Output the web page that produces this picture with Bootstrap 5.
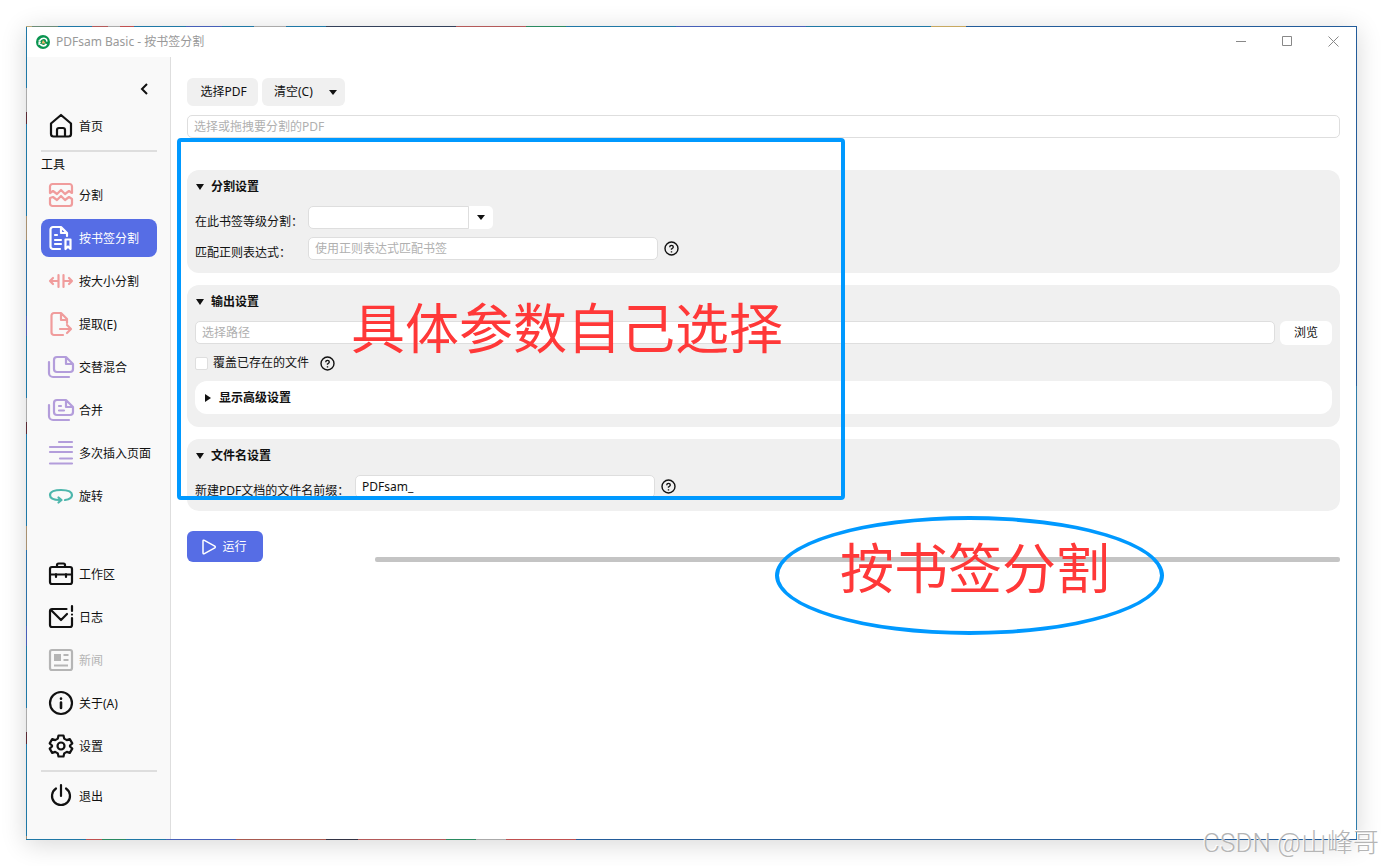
<!DOCTYPE html>
<html lang="zh-CN">
<head>
<meta charset="utf-8">
<meta name="viewport" content="width=device-width, initial-scale=1">
<title>PDFsam Basic - 按书签分割</title>
<link href="https://cdn.jsdelivr.net/npm/bootstrap@5.3.0/dist/css/bootstrap.min.css" rel="stylesheet">
<style>
  body { font-family: "Noto Sans", "Noto Sans CJK SC", sans-serif; font-size: 12px; line-height: 18px; color: #111; background: #fff; }
  input, button { color: inherit; }
  .desktop { min-height: 100vh; padding: 26px; position: relative; overflow: hidden; }
  .app-window { min-width: 0; padding: 1px; box-shadow: 0 4px 24px rgba(0,0,0,.16);
    background:
      linear-gradient(90deg, #b8a878 0 6px, #6c8c78 6px 32px, #1f78a6 32px 66px, #b45a5a 66px 82px, #aaa 82px 94px, #c05050 94px 108px, #1f78a6 108px 160px, #4660b8 160px 196px, #1f78a6 196px 228px, #aaa 228px 260px, #1f78a6 260px 300px, #33405a 300px 430px, #b45a5a 430px 500px, #2a8a60 500px 540px, #1f78a6 540px 650px, #4660b8 650px 780px, #1f78a6 780px 905px, #c8a860 905px 940px, #235c9a 940px) top / 100% 1px no-repeat,
      linear-gradient(90deg, #1f78a6 0 60px, #c05050 60px 76px, #2a8a60 76px 100px, #1f78a6 100px 140px, #4660b8 140px 210px, #a85a50 210px 300px, #334 300px 332px, #b45a5a 332px 420px, #2a8a60 420px 450px, #aaa 450px 480px, #c05050 480px 550px, #235c9a 550px) bottom / 100% 1px no-repeat,
      repeating-linear-gradient(180deg, #1f78a6 0 62px, #aaa 62px 86px, #5a2a34 86px 98px, #1f78a6 98px 190px, #a89070 190px 214px, #2a70a8 214px 290px, #4660b8 290px 310px) left / 1px 100% no-repeat,
      linear-gradient(180deg, #235c9a 0 360px, #2f7cab 360px) right / 1px 100% no-repeat; }
  .titlebar { height: 30px; padding-left: 9px; gap: 6px; color: #999; background: #fff; }
  .win-btn { display: block; width: 46px; height: 28px; padding: 0; border: 0; background: none; color: #888; }
  .win-btn svg { display: block; margin: 0 auto; }
  .side { width: 144px; flex: none; padding: 13px 13px 24px 14px; background: #f9f9f9; border-right: 1px solid #dedede; }
  .collapse-btn { height: 37px; padding: 0 8px 0 0; border: 0; background: none; }
  .collapse-btn svg { display: block; }
  .side-btn { display: flex; align-items: center; width: 100%; height: 38px; gap: 6px; padding: 2px 8px 0; border: 0; border-radius: 8px; background: none; white-space: nowrap; text-align: left; }
  .side-btn svg { width: 24px; height: 24px; margin-bottom: 2px; flex: none; overflow: visible; }
  .side-btn.active { background: #566de5; color: #fff; }
  .side-btn:disabled { color: #b5b5b5; }
  .side-list { display: flex; flex-direction: column; gap: 5px; }
  .rule { height: 2px; background: #dedede; }
  .side-title { height: 24px; line-height: 26px; }
  .ico { fill: none; stroke: currentColor; stroke-width: 2.200; stroke-linecap: round; stroke-linejoin: round; }
  .pink { color: #f09c9c; } .violet { color: #b39ddb; } .teal { color: #4db6ac; }
  .work { min-width: 0; padding: 21px 16px 16px; background: #fff; }
  .tool-btn { width: 71px; height: 28px; border: 0; border-radius: 6px; background: #f0f0f0; padding: 0 8px 0 10px; }
  .tool-btn.split { width: 83px; padding-left: 12px; }
  .source { margin: 9px 0 32px; }
  .panels { gap: 12px; }
  .path-line { gap: 5px; }
  .field { height: 23px; border: 1px solid #dedede; border-radius: 5px; padding: 0 6px; background: #fff; font-size: 12px; line-height: 18px; min-width: 0; outline: 0; }
  .field::placeholder { color: #b0b0b0; opacity: 1; }
  .panel { background: #f0f0f0; border-radius: 12px; padding: 0 8px 13px; }
  .panel-head { display: flex; align-items: center; gap: 6px; height: 32px; margin-bottom: 4px; padding: 2px 0 0; border: 0; background: none; font-weight: 700; }
  .row-label { width: 113px; padding-top: 7px; white-space: nowrap; align-self: flex-start; }
  .row-label.wide { width: 160px; }
  .form-line { height: 23px; }
  .level { width: 161px; border-radius: 5px 0 0 5px; }
  .arrow-btn { width: 24px; height: 23px; border: 0; border-radius: 0 5px 5px 0; background: #fff; }
  .help { margin-left: 6px; flex: none; }
  .w350 { width: 350px; } .w300 { width: 300px; }
  .browse { width: 52px; height: 24px; border: 0; border-radius: 6px; background: #fff; }
  .tick { appearance: none; width: 13px; height: 13px; margin: 0; border: 1px solid #dedede; border-radius: 2px; background: #fff; }
  .check-line { height: 36px; gap: 5px; }
  .advanced { width: 100%; height: 33px; margin: 0; padding: 0 8px; background: #fff; border-radius: 12px; }
  .run-line { margin-top: 20px; }
  .run-btn { width: 76px; height: 31px; padding: 0 2px 0 0; border: 0; border-radius: 6px; background: #566de5; color: #fff; gap: 5px; }
  .meter { height: 5px; border-radius: 2px; background: #c4c4c4; margin-left: 112px; }
  .note { position: absolute; pointer-events: none; color: #ff3838; font-family: "Noto Sans CJK SC", sans-serif; font-size: 54px; line-height: 60px; white-space: nowrap; }
  .note-box { left: 6px; top: 81px; width: 668px; height: 362px; border: 4px solid #09f; border-radius: 4px; padding: 154px 0 0 170px; }
  .note-oval { left: 604px; top: 459px; width: 389px; height: 119px; border: 4px solid #09f; border-radius: 50%; padding: 16px 0 0 61px; }
  .watermark { position: absolute; right: 4px; bottom: 5px; color: #b5b5b5; font: 300 26px/36px Roboto, "Noto Sans CJK SC", sans-serif; text-shadow: -1px -1px 0 #fff; }
</style>
</head>
<body>
<div class="desktop d-flex">
  <div class="app-window d-flex flex-column flex-grow-1">
    <header class="titlebar d-flex">
      <svg width="14" height="14" viewBox="0 0 14 14" class="align-self-center flex-shrink-0" aria-hidden="true"><circle cx="7" cy="7" r="7" fill="#0a9450"/><path d="M3.200 9.800C2.600 6 4.700 3 8 3.200c2 .2 3 1.600 2.800 3.400" fill="none" stroke="#fff" stroke-width="1.500"/><path d="M4 9.200c2.500 2.400 5 2.200 6.500-.2" fill="none" stroke="#fff" stroke-width="1.600"/><path d="M7 5l2.800 3.600H5.600z" fill="#f2b36b"/><path d="M2.500 5.500L5 8" stroke="#bfe5d0"/></svg>
      <span class="align-self-center">PDFsam Basic - 按书签分割</span>
      <div class="ms-auto d-flex">
        <button class="win-btn" aria-label="最小化"><svg width="11" height="11" viewBox="0 0 11 11"><path d="M0 5.500h10" stroke="currentColor"/></svg></button>
        <button class="win-btn" aria-label="最大化"><svg width="11" height="11" viewBox="0 0 11 11"><path d="M.5.5h9v9h-9z" fill="none" stroke="currentColor"/></svg></button>
        <button class="win-btn" aria-label="关闭"><svg width="11" height="11" viewBox="0 0 11 11"><path d="M.5.5l10 10M10.500.5l-10 10" stroke="currentColor"/></svg></button>
      </div>
    </header>
    <div class="d-flex flex-grow-1">
      <nav class="side d-flex flex-column">
        <button class="collapse-btn align-self-end" aria-label="收起"><svg width="10" height="12" viewBox="0 0 10 12" fill="none" stroke="#111" stroke-width="2"><path d="M8 1L3 6l5 5"/></svg></button>
        <div class="side-list">
          <button class="side-btn"><svg class="ico" viewBox="0 0 24 24"><path d="M2 9.500L12 1l10 8.500v10.500a2.500 2.500 0 0 1-2.500 2.500h-15A2.500 2.500 0 0 1 2 20zM8 22v-6a2 2 0 0 1 2-2h4a2 2 0 0 1 2 2v6"/></svg>首页</button>
          <div class="rule"></div>
        </div>
        <div class="side-title">工具</div>
        <div class="side-list">
          <button class="side-btn"><svg class="ico pink" viewBox="0 0 24 24"><path d="M1 9V3.500A2.500 2.500 0 0 1 3.500 1h17A2.500 2.500 0 0 1 23 3.500V10l-3-2-4 3-4-4-4 4-4-3-3 2zM1 15l3-1 4 3 4-4 4 4 4-3 3 2v4.500a2.500 2.500 0 0 1-2.500 2.500h-17A2.500 2.500 0 0 1 1 20.500z"/></svg>分割</button>
          <button class="side-btn active"><svg class="ico" viewBox="0 0 24 24"><path d="M11 23H4a2.500 2.500 0 0 1-2.500-2.500v-17A2.500 2.500 0 0 1 4 1h8l6 6v3M12 1v6h6M6 9h2M6 14h6M6 18h6M16.500 13.500h5V23L19 20.500 16.500 23z"/></svg>按书签分割</button>
          <button class="side-btn"><svg class="ico pink" viewBox="0 0 24 24"><path d="M9.500 6v12M14.500 6v12M9 12H1M4 9l-3 3 3 3M15 12h8M20 9l3 3-3 3"/></svg>按大小分割</button>
          <button class="side-btn"><svg class="ico pink" viewBox="0 0 24 24"><path d="M14 23H5a2.500 2.500 0 0 1-2.500-2.500v-17A2.500 2.500 0 0 1 5 1h7l6 6v4M12 2v6h6M11 17h10M18 13l4 4-4 4"/></svg>提取(E)</button>
          <button class="side-btn"><svg class="ico violet" viewBox="0 0 24 24"><path d="M8 2h9l7 7v5a3 3 0 0 1-3 3H8a3 3 0 0 1-3-3V5a3 3 0 0 1 3-3zM17 2v7h7M0 7v11a4 4 0 0 0 4 4h16"/></svg>交替混合</button>
          <button class="side-btn"><svg class="ico violet" viewBox="0 0 24 24"><path d="M8 2h9l7 7v5a3 3 0 0 1-3 3H8a3 3 0 0 1-3-3V5a3 3 0 0 1 3-3zM17 2v7h7M0 7v11a4 4 0 0 0 4 4h16M10 8h2M10 12.500h5"/></svg>合并</button>
          <button class="side-btn"><svg class="ico violet" viewBox="0 0 24 24"><path d="M10 1h13M1 6h22M1 11h22M11 17.500h12M1 22.500h22"/></svg>多次插入页面</button>
          <button class="side-btn"><svg class="ico teal" viewBox="0 0 24 24"><path d="M16 16c4-.5 7-2.200 7-5 0-3.200-4.800-5-11-5S1 7.800 1 11s4 5 10 5M9.500 13.500l3 2.500-3 2.500"/></svg>旋转</button>
        </div>
        <div class="side-list mt-auto">
          <button class="side-btn"><svg class="ico" viewBox="0 0 24 24"><path d="M3 5h18a2 2 0 0 1 2 2v13a2 2 0 0 1-2 2H3a2 2 0 0 1-2-2V7a2 2 0 0 1 2-2zM8 5V3a1.500 1.500 0 0 1 1.500-1.500h5A1.500 1.500 0 0 1 16 3v2M1 12.500h22M7 12v3M17 12v3"/></svg>工作区</button>
          <button class="side-btn"><svg class="ico" viewBox="0 0 24 24"><path d="M17.500 4H3a2 2 0 0 0-2 2v14a2 2 0 0 0 2 2h18a2 2 0 0 0 2-2v-7M2 5l10 10 6-6M23 1v5M23 9.500v.1"/></svg>日志</button>
          <button class="side-btn" disabled><svg class="ico" viewBox="0 0 24 24"><path d="M3 2h18a2 2 0 0 1 2 2v16a2 2 0 0 1-2 2H3a2 2 0 0 1-2-2V4a2 2 0 0 1 2-2z"/><path d="M5 6h7v7H5z" fill="currentColor" stroke="none"/><path d="M14.500 7h5M14.500 12h5M5 17.500h14" stroke-linecap="butt"/></svg>新闻</button>
          <button class="side-btn"><svg class="ico" viewBox="0 0 24 24"><circle cx="12" cy="12" r="11"/><path d="M12 11.500V17M12 7.500v.2" stroke-width="2.600"/></svg>关于(A)</button>
          <button class="side-btn"><svg class="ico" viewBox="0 0 24 24"><circle cx="12" cy="12" r="3.500"/><path d="M9.500 1.500h5l.7 3.100 2.600 1.500 3-1 2.500 4.300-2.300 2.100v1l2.300 2.100-2.500 4.300-3-1-2.600 1.500-.7 3.100h-5l-.7-3.100-2.600-1.500-3 1-2.500-4.300L3 12.500v-1L.7 9.400l2.500-4.300 3 1 2.600-1.500z"/></svg>设置</button>
          <div class="rule"></div>
          <button class="side-btn"><svg class="ico" viewBox="0 0 24 24"><path d="M12 1v11M7 4.500a9 9 0 1 0 10 0"/></svg>退出</button>
        </div>
      </nav>
      <main class="work flex-grow-1 position-relative">
        <div class="d-flex gap-1">
          <button class="tool-btn">选择PDF</button>
          <button class="tool-btn split d-flex align-items-center justify-content-between">清空(C)<svg width="8" height="5" viewBox="0 0 8 5"><path d="M0 0h8L4 5z" fill="#111"/></svg></button>
        </div>
        <div class="source d-flex"><input class="field flex-grow-1" type="text" placeholder="选择或拖拽要分割的PDF" aria-label="选择或拖拽要分割的PDF"></div>

        <div class="panels d-flex flex-column">
          <section class="panel">
            <button class="panel-head" aria-expanded="true"><svg width="10" height="6" viewBox="0 0 10 6"><path d="M1 0h8L5 6z" fill="#111"/></svg>分割设置</button>
            <div class="d-flex flex-column gap-2">
              <div class="form-line d-flex align-items-center">
                <label class="row-label" for="level">在此书签等级分割：</label>
                <input class="field level" id="level" type="text"><button class="arrow-btn p-0" aria-label="展开等级"><svg width="8" height="5" viewBox="0 0 8 5" class="d-block mx-auto"><path d="M0 0h8L4 5z" fill="#111"/></svg></button>
              </div>
              <div class="form-line d-flex align-items-center">
                <label class="row-label" for="regex">匹配正则表达式：</label>
                <input class="field w350" id="regex" type="text" placeholder="使用正则表达式匹配书签">
                <svg width="15" height="15" viewBox="0 0 15 15" class="help"><use href="#q"/></svg>
              </div>
            </div>
          </section>

          <section class="panel">
            <button class="panel-head" aria-expanded="true"><svg width="10" height="6" viewBox="0 0 10 6"><path d="M1 0h8L5 6z" fill="#111"/></svg>输出设置</button>
            <div class="path-line d-flex">
              <input class="field flex-grow-1" type="text" placeholder="选择路径" aria-label="选择路径">
              <button class="browse p-0">浏览</button>
            </div>
            <div class="check-line d-flex align-items-center">
              <input class="tick" type="checkbox" id="overwrite"><label for="overwrite">覆盖已存在的文件</label>
              <svg width="15" height="15" viewBox="0 0 15 15" class="help"><use href="#q"/></svg>
            </div>
            <button class="panel-head advanced" aria-expanded="false"><svg width="10" height="8" viewBox="0 0 10 8"><path d="M2 0v8l6-4z" fill="#111"/></svg>显示高级设置</button>
          </section>

          <section class="panel">
            <button class="panel-head" aria-expanded="true"><svg width="10" height="6" viewBox="0 0 10 6"><path d="M1 0h8L5 6z" fill="#111"/></svg>文件名设置</button>
            <div class="form-line d-flex align-items-center">
              <label class="row-label wide" for="prefix">新建PDF文档的文件名前缀：</label>
              <input class="field w300" id="prefix" type="text" value="PDFsam_">
              <svg width="15" height="15" viewBox="0 0 15 15" class="help"><use href="#q"/></svg>
            </div>
          </section>
        </div>

        <div class="run-line d-flex align-items-end">
          <button class="run-btn d-flex align-items-center justify-content-center"><svg width="16" height="16" viewBox="0 0 16 16" fill="none" stroke="#fff" stroke-width="1.500" stroke-linejoin="round"><path d="M2 2.200v11.600q0 1.600 1.400.8l10.400-5.800q1-.8 0-1.600L3.400 1.400Q2 .6 2 2.200z"/></svg>运行</button>
          <div class="meter flex-grow-1" role="progressbar" aria-label="进度" aria-valuenow="0"></div>
        </div>

        <div class="note note-box">具体参数自己选择</div>
        <div class="note note-oval">按书签分割</div>
      </main>
    </div>
  </div>
  <div class="watermark">CSDN @山峰哥</div>
</div>
<svg width="0" height="0" class="position-absolute" aria-hidden="true"><symbol id="q" viewBox="0 0 15 15"><circle cx="7.500" cy="7.500" r="6.500" fill="none" stroke="#111" stroke-width="1.400"/><path d="M5.700 6.200Q5.800 4.400 7.500 4.400T9.300 6q0 1-1.800 2v.7M7.500 10.200v1.300" fill="none" stroke="#111" stroke-width="1.400"/></symbol></svg>
<script src="https://cdn.jsdelivr.net/npm/bootstrap@5.3.0/dist/js/bootstrap.bundle.min.js"></script>
</body>
</html>
